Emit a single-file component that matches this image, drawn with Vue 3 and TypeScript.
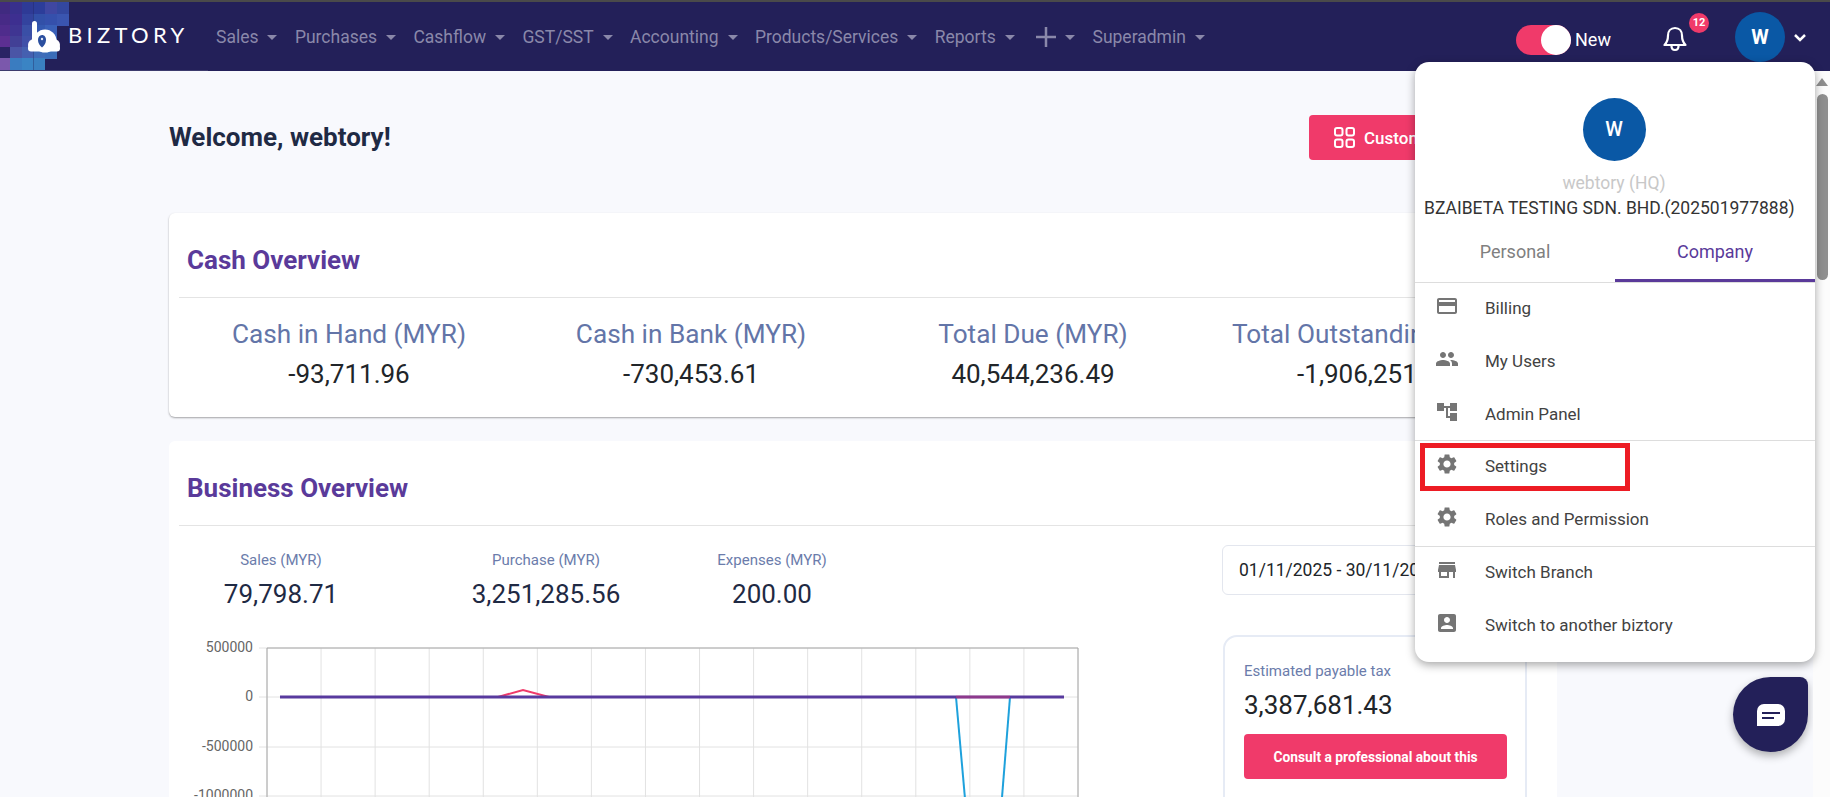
<script setup lang="ts">
const navItems = ['Sales', 'Purchases', 'Cashflow', 'GST/SST', 'Accounting', 'Products/Services', 'Reports', '+', 'Superadmin']

const mosaicColumns = [0, 10, 22, 33, 45, 57]
const mosaicRows = [2, 14, 25, 36, 47, 58]
const mosaicColors: string[][] = [
  ['#402a80', '#38308c', '#2e3a96', '#2c3d9a', '#3f47a2', '#33479f'],
  ['#472a86', '#3d2f90', '#33439e', '#3250a8', '#3550ac', '#3a55b0'],
  ['#4f2c8c', '#3f3592', '#3a4fa6', '#3458b0', '#3a60b8', ''],
  ['#5c2f92', '#424096', '#4050a8', '#3a5cb4', '#3a60b8', ''],
  ['#2a2364', '#4a55a6', '#4560b0', '#3f6cb8', '#3a6cb8', ''],
  ['#7b58ac', '#3a7cc0', '#3a84c4', '#3a80c0', '', '']
]
const mosaic = mosaicColors.flatMap((row, r) =>
  row.map((fill, c) => ({ key: `${r}-${c}`, x: mosaicColumns[c], y: mosaicRows[r], w: 12, h: 12, fill })).filter((cell) => cell.fill)
)

const cashStats = [
  { label: 'Cash in Hand (MYR)', value: '-93,711.96' },
  { label: 'Cash in Bank (MYR)', value: '-730,453.61' },
  { label: 'Total Due (MYR)', value: '40,544,236.49' },
  { label: 'Total Outstanding (MYR)', value: '-1,906,251.12' }
]
const businessStats = [
  { label: 'Sales (MYR)', value: '79,798.71' },
  { label: 'Purchase (MYR)', value: '3,251,285.56' },
  { label: 'Expenses (MYR)', value: '200.00' }
]

const icons = {
  billing: 'M20 4H4c-1.11 0-1.99.89-1.99 2L2 18c0 1.11.89 2 2 2h16c1.11 0 2-.89 2-2V6c0-1.11-.89-2-2-2zm0 14H4v-6h16v6zm0-10H4V6h16v2z',
  users: 'M16 11c1.66 0 2.99-1.34 2.99-3S17.66 5 16 5c-1.66 0-3 1.34-3 3s1.34 3 3 3zm-8 0c1.66 0 2.99-1.34 2.99-3S9.66 5 8 5C6.34 5 5 6.34 5 8s1.34 3 3 3zm0 2c-2.33 0-7 1.17-7 3.5V19h14v-2.5c0-2.33-4.67-3.5-7-3.5zm8 0c-.29 0-.62.02-.97.05 1.16.84 1.97 1.97 1.97 3.45V19h6v-2.5c0-2.33-4.67-3.5-7-3.5z',
  tree: 'M22 11V3h-7v3H9V3H2v8h7V8h2v10h4v3h7v-8h-7v3h-2V8h2v3z',
  gear: 'M19.14 12.94c.04-.3.06-.61.06-.94 0-.32-.02-.64-.07-.94l2.03-1.58c.18-.14.23-.41.12-.61l-1.92-3.32c-.12-.22-.37-.29-.59-.22l-2.39.96c-.5-.38-1.03-.7-1.62-.94l-.36-2.54c-.04-.24-.24-.41-.48-.41h-3.84c-.24 0-.43.17-.47.41l-.36 2.54c-.59.24-1.13.57-1.62.94l-2.39-.96c-.22-.08-.47 0-.59.22L2.74 8.87c-.12.21-.08.47.12.61l2.03 1.58c-.05.3-.09.63-.09.94s.02.64.07.94l-2.03 1.58c-.18.14-.23.41-.12.61l1.92 3.32c.12.22.37.29.59.22l2.39-.96c.5.38 1.03.7 1.62.94l.36 2.54c.05.24.24.41.48.41h3.84c.24 0 .44-.17.47-.41l.36-2.54c.59-.24 1.13-.56 1.62-.94l2.39.96c.22.08.47 0 .59-.22l1.92-3.32c.12-.22.07-.47-.12-.61l-2.01-1.58zM12 15.6c-1.98 0-3.6-1.62-3.6-3.6s1.62-3.6 3.6-3.6 3.6 1.62 3.6 3.6-1.62 3.6-3.6 3.6z',
  store: 'M20 4H4v2h16V4zm1 10v-2l-1-5H4l-1 5v2h1v6h10v-6h4v6h2v-6h1zm-9 4H6v-4h6v4z',
  box: 'M3 5v14c0 1.1.89 2 2 2h14c1.1 0 2-.9 2-2V5c0-1.1-.9-2-2-2H5c-1.11 0-2 .9-2 2zm12 4c0 1.66-1.34 3-3 3s-3-1.34-3-3 1.34-3 3-3 3 1.34 3 3zm-9 8c0-2 4-3.1 6-3.1s6 1.1 6 3.1v1H6v-1z'
}

const menuGroups = [
  [
    { label: 'Billing', icon: icons.billing },
    { label: 'My Users', icon: icons.users },
    { label: 'Admin Panel', icon: icons.tree }
  ],
  [
    { label: 'Settings', icon: icons.gear, marked: true },
    { label: 'Roles and Permission', icon: icons.gear }
  ],
  [
    { label: 'Switch Branch', icon: icons.store },
    { label: 'Switch to another biztory', icon: icons.box }
  ]
]

// Chart geometry, in the SVG's own coordinates.
const plotLeft = 88
const plotWidth = 811
const columnWidth = plotWidth / 15
const verticals = Array.from({ length: 16 }, (_, i) => plotLeft + i * columnWidth)
const horizontals = [
  { y: 8, label: '500000' },
  { y: 57, label: '0' },
  { y: 107, label: '-500000' },
  { y: 156, label: '-1000000' }
]
</script>

<template>
  <div class="app">
    <header class="nav">
      <div class="brand">
        <svg class="mosaic" width="70" height="69" viewBox="0 2 70 69">
          <rect v-for="cell in mosaic" :key="cell.key" :x="cell.x" :y="cell.y" :width="cell.w" :height="cell.h" :fill="cell.fill" />
          <line x1="33.5" y1="2" x2="33.5" y2="71" stroke="#232059" stroke-opacity=".35" />
          <circle cx="34" cy="45" r="6" fill="#fff" />
          <circle cx="54" cy="45" r="6" fill="#fff" />
          <rect x="32" y="21" width="5" height="26" rx="2.5" fill="#fff" />
          <circle cx="45" cy="41" r="11.5" fill="#fff" />
          <rect x="28" y="45" width="32" height="6.500" rx="3" fill="#fff" />
          <path d="M42 35c-2.500 0-4 2.300-4 5 0 3 1.800 5.500 4 7.500 2.200-2 4-4.500 4-7.500 0-2.700-1.500-5-4-5z" fill="#2b4f9f" />
          <circle cx="42" cy="39" r="1.200" fill="#dfe6f5" />
        </svg>
        <span class="brand-name">BIZTORY</span>
      </div>
      <nav class="nav-links">
        <a v-for="item in navItems" :key="item" class="nav-link">
          <svg v-if="item === '+'" class="plus" width="20" height="20" viewBox="0 0 20 20">
            <path d="M10 0v20M0 10h20" stroke="#8a88aa" stroke-width="2.500" />
          </svg>
          <span v-else>{{ item }}</span>
          <i class="caret"></i>
        </a>
      </nav>
      <div class="nav-right">
        <div class="toggle"><span class="knob"></span></div>
        <span class="new">New</span>
        <div class="bell">
          <svg width="24" height="26" viewBox="0 0 24 26" fill="none" stroke="#fff" stroke-width="2.200" stroke-linejoin="round">
            <path d="M12 2c-4.500 0-7 3.500-7 7.500 0 5-1 7-3.500 9.500h21c-2.500-2.500-3.500-4.500-3.500-9.500C19 5.500 16.500 2 12 2z" />
            <path d="M8.500 20c0 2.500 1.500 4 3.500 4s3.500-1.500 3.500-4" />
          </svg>
          <span class="badge">12</span>
        </div>
        <div class="nav-avatar">W</div>
        <svg class="chevron" width="12" height="8" viewBox="0 0 12 8" fill="none" stroke="#fff" stroke-width="2.500">
          <path d="M1 1l5 5 5-5" />
        </svg>
      </div>
    </header>

    <div class="body">
      <main class="page">
        <section class="content">
          <div class="welcome-row">
            <h1>Welcome, webtory!</h1>
            <button class="customize">
              <svg width="21" height="21" viewBox="0 0 21 21" fill="none" stroke="#fff" stroke-width="2">
                <rect x="1" y="1" width="7.500" height="7.500" rx="2" />
                <rect x="12.500" y="1" width="7.500" height="7.500" rx="2" />
                <rect x="1" y="12.500" width="7.500" height="7.500" rx="2" />
                <rect x="12.500" y="12.500" width="7.500" height="7.500" rx="2" />
              </svg>
              Customize
            </button>
          </div>

          <article class="card cash">
            <h2>Cash Overview</h2>
            <div class="cash-grid">
              <div v-for="stat in cashStats" :key="stat.label" class="cash-stat">
                <div class="cash-label">{{ stat.label }}</div>
                <div class="cash-value">{{ stat.value }}</div>
              </div>
            </div>
          </article>

          <article class="card business">
            <h2>Business Overview</h2>
            <div class="business-body">
              <div class="business-left">
                <div class="business-stats">
                  <div v-for="stat in businessStats" :key="stat.label" class="business-stat">
                    <div class="business-label">{{ stat.label }}</div>
                    <div class="business-value">{{ stat.value }}</div>
                  </div>
                </div>
                <svg class="chart" width="905" height="170" viewBox="0 0 905 170">
                  <line v-for="x in verticals" :key="x" :x1="x" :x2="x" y1="8" y2="170" stroke="#e2e2e2" />
                  <g v-for="row in horizontals" :key="row.y">
                    <line x1="80" :x2="plotLeft + plotWidth" :y1="row.y" :y2="row.y" stroke="#e2e2e2" />
                    <text x="74" :y="row.y + 4" text-anchor="end" class="tick">{{ row.label }}</text>
                  </g>
                  <path :d="`M${plotLeft} 170V8H${plotLeft + plotWidth}V170`" fill="none" stroke="#a8a8a8" />
                  <polyline points="319,57 344,50 370,57" fill="none" stroke="#f03a6a" stroke-width="2" />
                  <polyline points="777,57 787,170" fill="none" stroke="#1ea1dc" stroke-width="2" />
                  <polyline points="831,57 822,170" fill="none" stroke="#1ea1dc" stroke-width="2" />
                  <line x1="101" x2="885" y1="57" y2="57" stroke="#583a9e" stroke-width="3" />
                  <line x1="777" x2="831" y1="57" y2="57" stroke="#f03a6a" stroke-opacity=".35" stroke-width="3" />
                </svg>
              </div>
              <aside class="business-right">
                <div class="date-input">01/11/2025 - 30/11/2025</div>
                <div class="tax-card">
                  <div class="tax-label">Estimated payable tax</div>
                  <div class="tax-value">3,387,681.43</div>
                  <button class="consult">Consult a professional about this</button>
                </div>
              </aside>
            </div>
          </article>
        </section>

        <button class="chat" aria-label="Chat">
          <svg width="28" height="22" viewBox="0 0 28 22">
            <path d="M7 0h14a7 7 0 0 1 7 7v8a7 7 0 0 1-7 7H0V7a7 7 0 0 1 7-7z" fill="#fff" />
            <path d="M5 9h18M5 14h12" stroke="#232059" stroke-width="2" />
          </svg>
        </button>
      </main>

      <div class="scrollbar">
        <i class="scroll-up"></i>
        <span class="scroll-thumb"></span>
      </div>
    </div>

    <div class="menu">
      <div class="menu-head">
        <div class="menu-avatar">W</div>
        <div class="menu-name">webtory (HQ)</div>
        <div class="menu-company">BZAIBETA TESTING SDN. BHD.(202501977888)</div>
      </div>
      <div class="tabs">
        <div class="tab">Personal</div>
        <div class="tab active">Company</div>
      </div>
      <div class="menu-list">
        <div v-for="(group, index) in menuGroups" :key="index" class="menu-group">
          <div v-for="item in group" :key="item.label" class="menu-item">
            <svg width="24" height="24" viewBox="0 0 24 24" fill="#757575"><path :d="item.icon" /></svg>
            <span>{{ item.label }}</span>
            <i v-if="item.marked" class="marker"></i>
          </div>
        </div>
      </div>
    </div>
  </div>
</template>

<style>
html,
body {
  margin: 0;
  overflow: hidden;
}
</style>

<style scoped>
.app {
  position: relative;
  width: 1830px;
  height: 797px;
  overflow: hidden;
  display: flex;
  flex-direction: column;
  font-family: Roboto, 'Liberation Sans', sans-serif;
  background: #f8f9fd;
}

.nav {
  height: 69px;
  flex: none;
  border-top: 2px solid #4a4a4a;
  background: #232059;
  display: flex;
  align-items: center;
  position: relative;
}
.brand {
  width: 216px;
  height: 69px;
  flex: none;
  display: flex;
  align-items: center;
  position: relative;
}
.brand::after {
  content: '';
  position: absolute;
  left: 0;
  bottom: 0;
  width: 208px;
  height: 1px;
  background: rgba(255, 255, 255, 0.12);
}
.mosaic {
  flex: none;
}
.brand-name {
  margin: -4px 0 0 -2px;
  color: #fff;
  font-family: Lato, sans-serif;
  font-size: 22px;
  letter-spacing: 4.300px;
  line-height: 1;
}
.nav-links {
  display: flex;
  gap: 17.400px;
  align-items: center;
}
.nav-link {
  display: flex;
  align-items: center;
  gap: 9px;
  color: #8a88aa;
  font-size: 17.500px;
  margin-top: 1px;
}
.plus {
  margin: 0 0 0 4px;
}
.caret {
  width: 0;
  height: 0;
  border-left: 5px solid transparent;
  border-right: 5px solid transparent;
  border-top: 5px solid #8a88aa;
  margin-top: 1px;
}
.nav-right {
  position: absolute;
  inset: 0 0 0 auto;
  width: 314px;
  display: flex;
  align-items: center;
}
.toggle {
  width: 55px;
  height: 30px;
  border-radius: 15px;
  background: #f03a6a;
  display: flex;
  justify-content: flex-end;
  margin-top: 6px;
}
.knob {
  width: 30px;
  height: 30px;
  border-radius: 50%;
  background: #fff;
}
.new {
  margin: 6px 0 0 4px;
  color: #fff;
  font-size: 18px;
  width: 88px;
}
.bell {
  position: relative;
  width: 24px;
  height: 26px;
  margin-top: 4px;
}
.badge {
  position: absolute;
  left: 26px;
  top: -13px;
  width: 20px;
  height: 20px;
  border-radius: 50%;
  background: #f03a6a;
  color: #fff;
  font-size: 11px;
  font-weight: 700;
  line-height: 20px;
  text-align: center;
}
.nav-avatar {
  width: 50px;
  height: 50px;
  margin-left: 48px;
  margin-top: 1px;
  border-radius: 50%;
  background: #0a58a5;
  color: #fff;
  font-size: 20px;
  font-weight: 700;
  line-height: 50px;
  text-align: center;
}
.chevron {
  margin: 2px 0 0 9px;
}

.body {
  flex: 1;
  min-height: 0;
  display: flex;
}
.page {
  flex: 1;
  position: relative;
  min-width: 0;
  overflow: hidden;
  padding: 44px 256px 0 169px;
}
.content {
  width: 1388px;
}
.welcome-row {
  height: 45px;
  display: flex;
  align-items: center;
  justify-content: space-between;
  margin-bottom: 53px;
}
h1 {
  margin: -2px 0 0;
  font-size: 26px;
  font-weight: 700;
  color: #1f2a44;
}
.customize {
  width: 224px;
  height: 45px;
  margin-right: 24px;
  border: 0;
  border-radius: 4px;
  background: #f03a6a;
  color: #fff;
  font: 500 17px Roboto, sans-serif;
  display: flex;
  align-items: center;
  gap: 9px;
  padding: 0 0 0 25px;
}

.card {
  background: #fff;
  border-radius: 6px;
}
.cash {
  height: 204px;
  margin-bottom: 24px;
  box-shadow: 0 1px 2px rgba(0, 0, 0, 0.35);
}
h2 {
  margin: 0 10px;
  padding: 9px 0 0 8px;
  height: 85px;
  box-sizing: border-box;
  border-bottom: 1px solid #e4e4e4;
  display: flex;
  align-items: center;
  font-size: 26px;
  font-weight: 700;
  color: #5a3a9a;
}
.cash-grid {
  display: grid;
  grid-template-columns: repeat(4, 342px);
  margin: 21px 0 0 9px;
}
.cash-stat {
  text-align: center;
}
.cash-label {
  color: #6375a8;
  font-size: 26.200px;
  line-height: 30px;
  white-space: nowrap;
}
.cash-value {
  margin-top: 10px;
  color: #212529;
  font-size: 26px;
  line-height: 30px;
}

.business-body {
  display: flex;
}
.business-left {
  width: 1053px;
  padding-left: 10px;
  box-sizing: border-box;
}
.business-stats {
  display: grid;
  grid-template-columns: 204px 326px 126px;
  margin-top: 24px;
  text-align: center;
}
.business-label {
  color: #6b7cab;
  font-size: 15px;
  line-height: 20px;
}
.business-value {
  margin-top: 9px;
  color: #1f2a44;
  font-size: 26px;
  line-height: 30px;
}
.chart {
  display: block;
  margin-top: 31px;
}
.tick {
  font-size: 14px;
  fill: #666;
}
.business-right {
  width: 305px;
  padding-top: 19px;
}
.date-input {
  height: 50px;
  box-sizing: border-box;
  border: 1px solid #e3e6ee;
  border-radius: 6px;
  padding-left: 16px;
  color: #212529;
  font-size: 17.500px;
  line-height: 48px;
}
.tax-card {
  margin: 40px 0 0 1px;
  height: 220px;
  box-sizing: border-box;
  border: 2px solid #e6ebf5;
  border-radius: 14px;
  padding: 24px 19px;
}
.tax-label {
  color: #6b7cab;
  font-size: 15px;
  line-height: 20px;
}
.tax-value {
  margin-top: 9px;
  color: #212529;
  font-size: 26px;
  line-height: 30px;
}
.consult {
  display: block;
  width: 263px;
  height: 45px;
  margin-top: 14px;
  border: 0;
  border-radius: 4px;
  background: #f03a6a;
  color: #fff;
  font: 700 13.800px Roboto, sans-serif;
}

.chat {
  position: absolute;
  left: 1733px;
  top: 606px;
  width: 75px;
  height: 75px;
  padding: 0;
  border: 0;
  border-radius: 50% 8px 50% 50%;
  background: #232059;
  box-shadow: 0 4px 8px rgba(0, 0, 0, 0.3);
  display: flex;
  align-items: center;
  justify-content: center;
}

.scrollbar {
  width: 17px;
  flex: none;
  position: relative;
  background: #fcfcfc;
}
.scroll-up {
  position: absolute;
  left: 3px;
  top: 7px;
  border-left: 6px solid transparent;
  border-right: 6px solid transparent;
  border-bottom: 8px solid #8f8f8f;
}
.scroll-thumb {
  position: absolute;
  left: 4px;
  top: 23px;
  width: 11px;
  height: 186px;
  border-radius: 6px;
  background: #8f8f8f;
}

.menu {
  position: absolute;
  left: 1415px;
  top: 62px;
  width: 400px;
  height: 600px;
  border-radius: 14px;
  background: #fff;
  box-shadow: 0 3px 10px rgba(0, 0, 0, 0.35);
}
.menu-head {
  height: 160px;
  box-sizing: border-box;
  padding-top: 36px;
  text-align: center;
}
.menu-avatar {
  width: 63px;
  height: 63px;
  margin: 0 auto;
  transform: translateX(-1px);
  border-radius: 50%;
  background: #0a58a5;
  color: #fff;
  font-size: 20px;
  font-weight: 500;
  line-height: 63px;
}
.menu-name {
  margin: 12px 2px 0 0;
  color: #c8c8c8;
  font-size: 17.500px;
  line-height: 20px;
}
.menu-company {
  margin-top: 5px;
  padding-left: 9px;
  text-align: left;
  color: #333;
  font-size: 17.500px;
  line-height: 20px;
  white-space: nowrap;
}
.tabs {
  height: 60px;
  display: flex;
  border-bottom: 1px solid #ddd;
}
.tab {
  flex: 1;
  box-sizing: border-box;
  height: 60px;
  padding-top: 20px;
  text-align: center;
  color: #808080;
  font-size: 18px;
  line-height: 20px;
}
.tab.active {
  color: #5a3a9a;
  border-bottom: 3px solid #5a3a9a;
}
.menu-list {
  margin-top: -2px;
}
.menu-group + .menu-group {
  border-top: 1px solid #ddd;
}
.menu-item {
  position: relative;
  height: 53px;
  box-sizing: border-box;
  display: flex;
  align-items: center;
  gap: 26px;
  padding-left: 20px;
  color: #424242;
  font-size: 17px;
}
.menu-group + .menu-group .menu-item {
  height: 52.500px;
  padding-bottom: 2px;
}
.menu-item svg {
  margin-top: -4px;
}
.marker {
  position: absolute;
  left: 5px;
  top: 2px;
  width: 210px;
  height: 48px;
  box-sizing: border-box;
  border: 5px solid #ed1c24;
}
</style>
